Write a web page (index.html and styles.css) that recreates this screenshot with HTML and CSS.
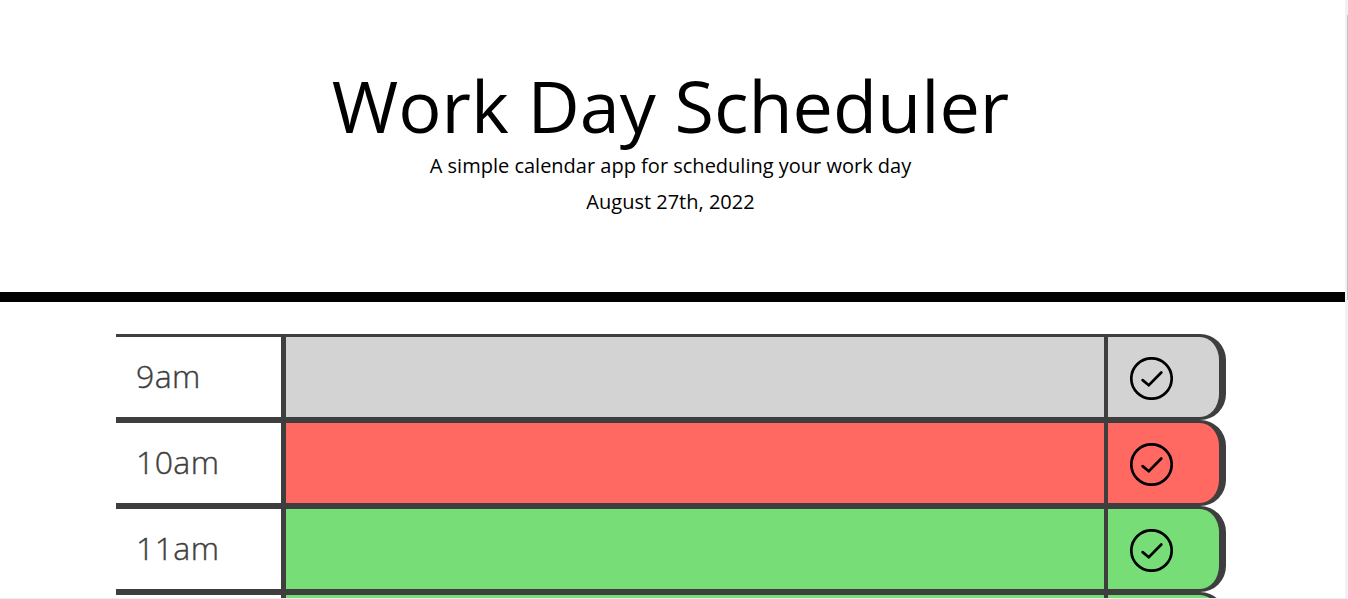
FILE: index.html
```
<!DOCTYPE html>
<html lang="en">
<head>
<meta charset="utf-8">
<title>Work Day Scheduler</title>
<link rel="stylesheet" href="styles.css">
</head>
<body>
<svg class="defs" width="0" height="0"><symbol id="tick" viewBox="0 0 43 43"><circle cx="21.5" cy="21.5" r="20.2"/><path d="M12.6 23.1L18.8 28.2L31.3 15.5"/></symbol></svg>
<div class="screen">
  <div class="page">
    <header class="hero">
      <h1 class="title">Work Day Scheduler</h1>
      <p class="lead">A simple calendar app for scheduling your work day</p>
      <p class="lead date">August 27th, 2022</p>
    </header>
    <main class="schedule">
      <div class="row past"><div class="hour">9am</div><div class="entry"></div><div class="save"><svg class="icon"><use href="#tick"/></svg></div></div>
      <div class="row present"><div class="hour">10am</div><div class="entry"></div><div class="save"><svg class="icon"><use href="#tick"/></svg></div></div>
      <div class="row future"><div class="hour">11am</div><div class="entry"></div><div class="save"><svg class="icon"><use href="#tick"/></svg></div></div>
      <div class="row future"><div class="hour"></div><div class="entry"></div><div class="save"></div></div>
    </main>
  </div>
  <div class="scrollbar"><div class="thumb"></div></div>
  <div class="bottom-edge"></div>
</div>
</body>
</html>
```
FILE: styles.css
```
* { box-sizing: border-box; }
body { margin: 0; background: #fff; color: #000; font-family: "Open Sans", sans-serif; }
.defs { display: none; }
.screen { display: grid; grid-template: 598px 1px / 1345px 3px; width: 1348px; height: 599px; overflow: hidden; }
.page { overflow: hidden; }
.hero { height: 302px; padding: 66px 4px 0 0; border-bottom: 10px solid #000; text-align: center; }
.title { margin: 0 0 6px; font-size: 72px; font-weight: 400; line-height: 79px; white-space: nowrap; }
.lead { margin: 0; font-size: 20px; font-weight: 400; line-height: 30px; }
.date { margin-top: 6px; }
.schedule { width: 1110px; margin: 32px 0 0 116px; }
.row { display: grid; grid-template-columns: 165px 823px 1fr; height: 86px; border: solid #3e3e3e; border-width: 3px 7px 3px 0; border-radius: 0 26px 26px 0; overflow: hidden; }
.hour { padding-left: 20px; background: #fff; color: #3e3e3e; font-size: 32px; font-weight: 300; letter-spacing: 0.4px; -webkit-text-stroke: 0.4px #3e3e3e; line-height: 78px; }
.entry { border-left: 5px solid #3e3e3e; }
.save { display: flex; align-items: center; border-left: 4px solid #3e3e3e; padding: 2px 0 0 22px; }
.icon { width: 43px; height: 43px; fill: none; stroke: #000; stroke-width: 2.7; stroke-linecap: round; stroke-linejoin: miter; }
.past { background: #d3d3d3; }
.present { background: #ff6961; }
.future { background: #77dd77; }
.scrollbar { background: #f1f1f1; padding: 15px 0 0 2px; }
.thumb { height: 285px; background: #c1c1c1; }
.bottom-edge { grid-column: 1 / 3; background: #ededed; }
```
